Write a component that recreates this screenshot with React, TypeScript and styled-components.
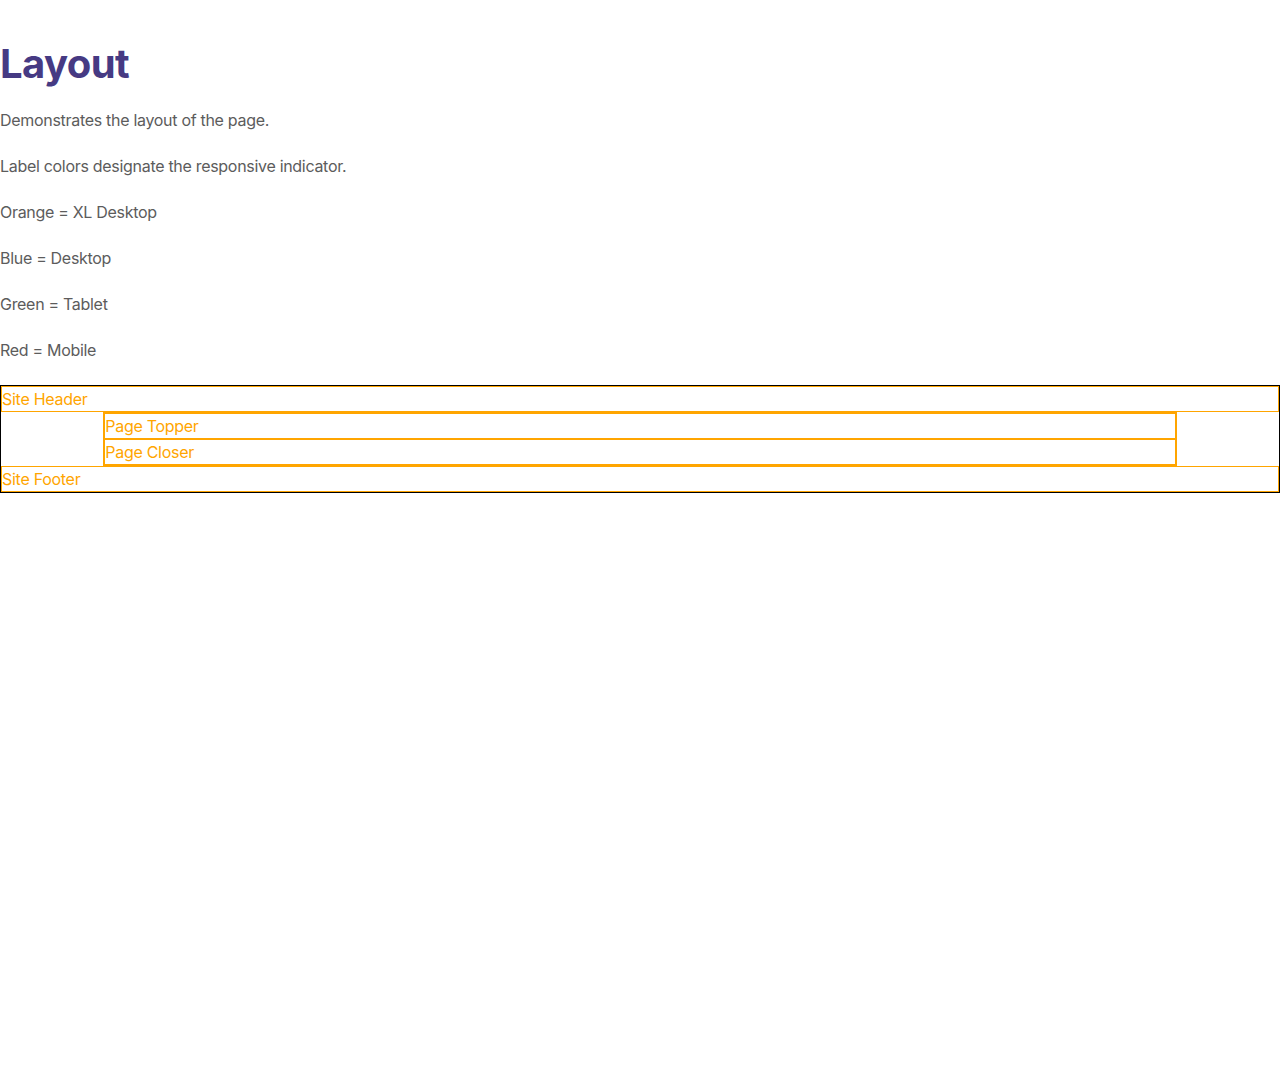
import React from "react";
import styled, { createGlobalStyle } from "styled-components";

const Global = createGlobalStyle`
  html, body { margin: 0; padding: 0; background: #fff; }
  body { font-family: Inter, "Open Sans", "Liberation Sans", sans-serif; }
`;

const Page = styled.div`
  padding-top: 40px;
`;

const Title = styled.h1`
  margin: 0 0 20px;
  font-size: 40px;
  line-height: 48px;
  font-weight: 700;
  letter-spacing: -0.6px;
  color: #463a83;
`;

const Text = styled.p`
  margin: 0 0 22px;
  font-size: 16px;
  line-height: 24px;
  letter-spacing: -0.3px;
  color: #5c5c5c;
`;

const Frame = styled.div`
  margin-top: 23px;
  border: 1px solid #000;
  display: grid;
  grid-template-columns: 8% 1fr 8%;
`;

const Region = styled.div<{ $span?: boolean }>`
  grid-column: ${(p) => (p.$span ? "1 / -1" : "2")};
  border: 1px solid #ffa500;
  color: #ffa500;
  font-size: 16px;
  line-height: 24px;
  letter-spacing: -0.28px;
`;

const Main = styled.div`
  grid-column: 2;
  border: 1px solid #ffa500;
  display: flex;
  flex-direction: column;
`;

const Gutter = styled.div<{ $col: number }>`
  grid-column: ${(p) => p.$col};
  grid-row: 2;
`;

export default function App() {
  const lines = [
    "Demonstrates the layout of the page.",
    "Label colors designate the responsive indicator.",
    "Orange = XL Desktop",
    "Blue = Desktop",
    "Green = Tablet",
    "Red = Mobile",
  ];
  return (
    <>
      <Global />
      <Page>
        <Title>Layout</Title>
        {lines.map((l) => (
          <Text key={l}>{l}</Text>
        ))}
        <Frame>
          <Region $span>Site Header</Region>
          <Gutter $col={1} />
          <Main>
            <Region>Page Topper</Region>
            <Region>Page Closer</Region>
          </Main>
          <Gutter $col={3} />
          <Region $span>Site Footer</Region>
        </Frame>
      </Page>
    </>
  );
}
